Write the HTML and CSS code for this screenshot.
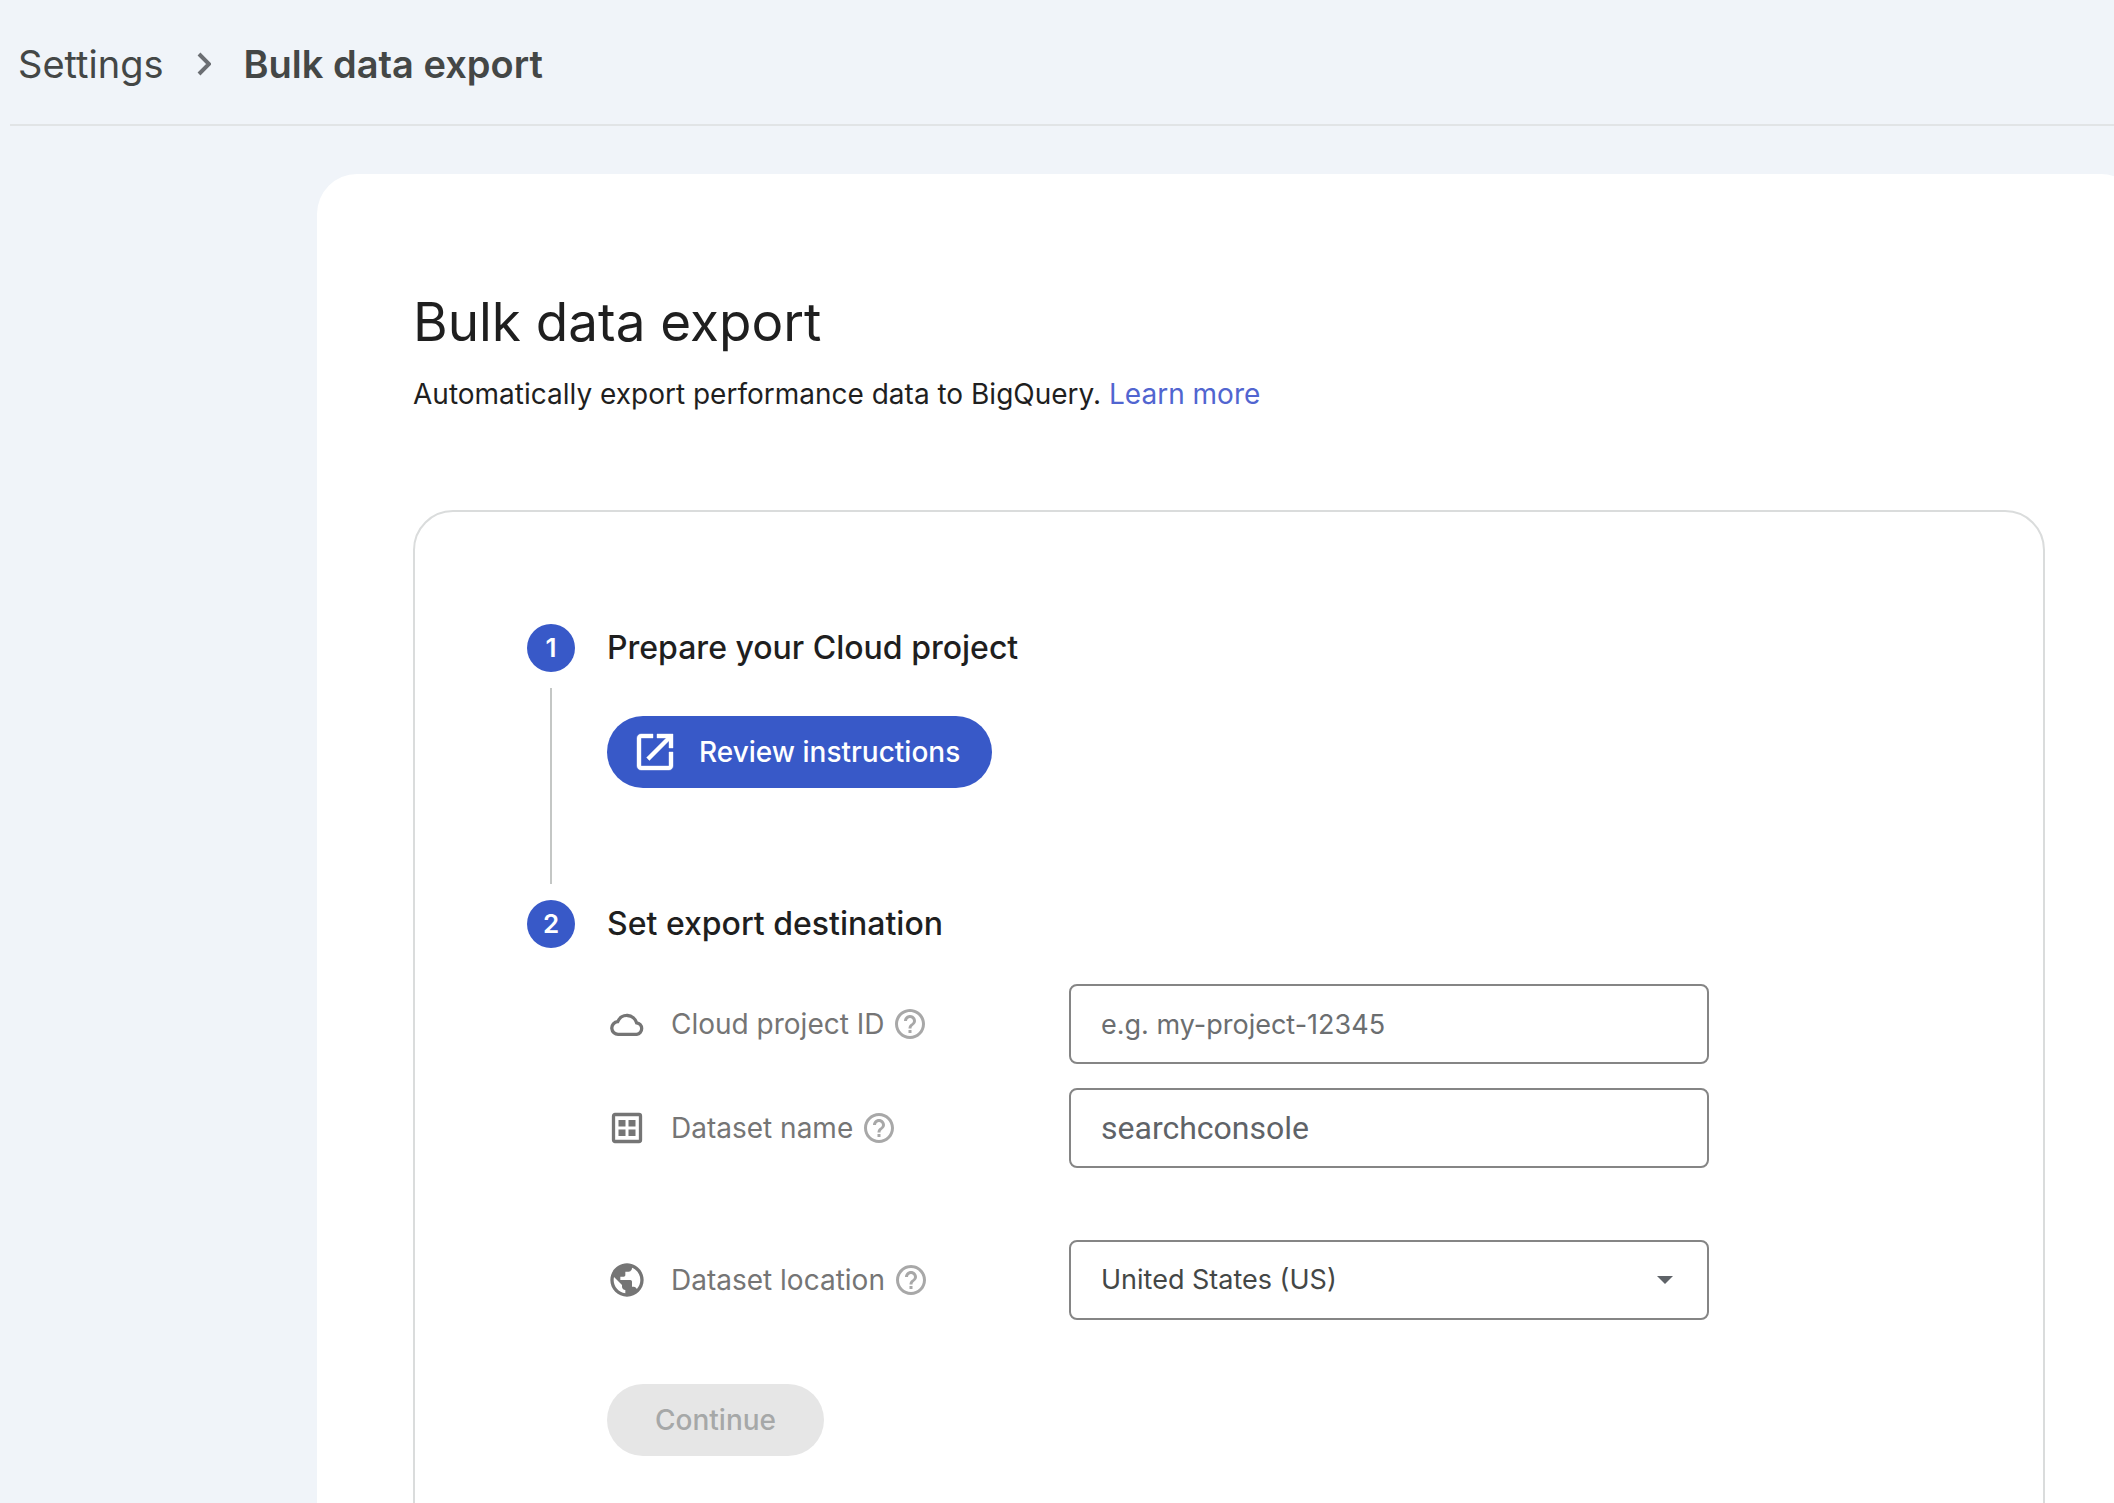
FILE: index.html
```
<!DOCTYPE html>
<html lang="en">
	<head>
		<meta charset="UTF-8">
		<meta name="viewport" content="width=device-width, initial-scale=1">
		<title>Bulk data export</title>
		<link rel="stylesheet" href="styles.css">
	</head>
	<body>
		<!-- shared icon for the three field labels -->
		<svg class="sprite" aria-hidden="true">
			<symbol id="help" viewBox="0 0 24 24">
				<path d="M11 18h2v-2h-2v2zm1-16C6.48 2 2 6.48 2 12s4.48 10 10 10 10-4.48 10-10S17.52 2 12 2zm0 18c-4.41 0-8-3.59-8-8s3.59-8 8-8 8 3.59 8 8-3.59 8-8 8zm0-14c-2.21 0-4 1.79-4 4h2c0-1.1.9-2 2-2s2 .9 2 2c0 2-3 1.75-3 5h2c0-2.25 3-2.5 3-5 0-2.21-1.79-4-4-4z"/>
			</symbol>
		</svg>

		<header class="topbar">
			<nav class="crumbs">
				<a href="#">Settings</a>
				<svg class="chevron" viewBox="0 0 14 24"><path d="M2 2l10 10L2 22"/></svg>
				<strong>Bulk data export</strong>
			</nav>
		</header>

		<main class="card">
			<h1>Bulk data export</h1>
			<p class="intro">Automatically export performance data to BigQuery. <a href="#">Learn more</a></p>

			<ol class="steps">
				<li class="step">
					<div class="marker">
						<span class="num">1</span>
						<i class="line"></i>
					</div>
					<div class="step-body">
						<h2>Prepare your Cloud project</h2>
						<button type="button" class="btn btn-primary">
							<svg viewBox="0 0 24 24"><path d="M19 19H5V5h6V3H5c-1.1 0-2 .9-2 2v14c0 1.1.9 2 2 2h14c1.1 0 2-.9 2-2v-7h-2v7zM13 3v2h4.6l-9.8 9.8 1.4 1.4L19 6.4V10h2V3z"/></svg>
							Review instructions
						</button>
					</div>
				</li>
				<li class="step">
					<div class="marker">
						<span class="num">2</span>
					</div>
					<form class="step-body">
						<h2>Set export destination</h2>
						<div class="fields">
							<div class="row">
								<svg class="icon" viewBox="0 0 40 40"><path class="stroke" d="M11.500 30.300a6.300 6.300 0 0 1-.8-12.600A10 10 0 0 1 29.600 18.800a5.800 5.800 0 0 1 .1 11.500z"/></svg>
								<label for="project">Cloud project ID</label>
								<svg class="help"><use href="#help"/></svg>
								<input id="project" class="box" type="text" placeholder="e.g. my-project-12345">
							</div>
							<div class="row row-dataset">
								<svg class="icon" viewBox="0 0 40 40"><rect class="stroke" x="6.500" y="6.500" width="27" height="27" rx="1.500"/><path d="M11.500 12h7v6.500h-7zM21.500 12h7v6.500h-7zM11.500 21.500h7V28h-7zM21.500 21.500h7V28h-7z"/></svg>
								<label for="dataset">Dataset name</label>
								<svg class="help"><use href="#help"/></svg>
								<input id="dataset" class="box box-value" type="text" value="searchconsole">
							</div>
							<div class="row">
								<svg class="icon" viewBox="0 0 24 24"><path d="M12 2C6.480 2 2 6.480 2 12s4.480 10 10 10 10-4.480 10-10S17.520 2 12 2zm-1 17.930c-3.950-.49-7-3.850-7-7.930 0-.62.080-1.210.21-1.790L9 15v1c0 1.100.9 2 2 2v1.930zm6.900-2.540c-.26-.81-1-1.390-1.900-1.390h-1v-3c0-.55-.45-1-1-1H8v-2h2c.55 0 1-.45 1-1V7h2c1.100 0 2-.9 2-2v-.41c2.930 1.190 5 4.060 5 7.410 0 2.080-.8 3.970-2.100 5.390z"/></svg>
								<label for="location">Dataset location</label>
								<svg class="help"><use href="#help"/></svg>
								<div class="select">
									<select id="location" class="box">
										<option>United States (US)</option>
									</select>
									<svg class="caret" viewBox="0 0 16 8"><path d="M0 0h16L8 8z"/></svg>
								</div>
							</div>
						</div>
						<button type="submit" class="btn btn-disabled" disabled>Continue</button>
					</form>
				</li>
			</ol>
		</main>
	</body>
</html>
```
FILE: styles.css
```
* {
	box-sizing: border-box;
}
body {
	height: 100vh;
	margin: 0;
	overflow: hidden;
	background: #f0f4f9;
	color: #1f1f1f;
	font: 28px/40px Inter, "Open Sans", sans-serif;
}
h1, h2, p, ol {
	margin: 0;
	padding: 0;
	font-weight: 400;
}
ol {
	list-style: none;
}
a {
	color: inherit;
	text-decoration: none;
}
svg {
	flex: none;
	fill: currentColor;
}
.sprite {
	display: none;
}

/* breadcrumb bar */
.topbar {
	margin-left: 10px;
	padding: 40px 8px 36px;
	border-bottom: 2px solid #e1e4e6;
}
.crumbs {
	display: flex;
	align-items: center;
	gap: 33px;
	color: #444746;
	font-size: 38px;
	line-height: 48px;
}
.crumbs strong {
	font-weight: 600;
}
.chevron {
	width: 14px;
	height: 24px;
	fill: none;
	stroke: #6b6e73;
	stroke-width: 4;
}

/* white page card, runs off the right and bottom of the window */
.card {
	min-height: 100vh;
	margin: 48px -27px 0 317px;
	padding: 112px 96px;
	border-radius: 40px;
	background: #fff;
}
h1 {
	font-size: 53px;
	line-height: 72px;
}
.intro {
	margin-top: 16px;
}
.intro a {
	color: #5165d0;
}
.steps {
	margin-top: 96px;
	padding: 112px;
	border: 2px solid #dadcdc;
	border-radius: 40px;
}
.step {
	display: flex;
	gap: 32px;
}
.marker {
	display: flex;
	flex-direction: column;
	align-items: center;
}
.num {
	width: 48px;
	height: 48px;
	border-radius: 50%;
	background: #3859c8;
	color: #fff;
	font-size: 26px;
	font-weight: 600;
	line-height: 48px;
	text-align: center;
}
.line {
	flex: 1;
	width: 2px;
	margin: 16px 0;
	background: #c4c7c5;
}
.step-body {
	flex: 1;
}
h2 {
	font-size: 32px;
	font-weight: 500;
	line-height: 48px;
}

/* buttons */
.btn {
	display: flex;
	align-items: center;
	height: 72px;
	border: 0;
	border-radius: 36px;
	font: 500 28px/40px Inter, "Open Sans", sans-serif;
}
.btn-primary {
	gap: 20px;
	margin: 44px 0 112px;
	padding: 0 32px 0 24px;
	background: #3859c8;
	color: #fff;
}
.btn-primary svg {
	width: 48px;
	height: 48px;
	stroke: currentColor;
	stroke-width: 0.2;
}
.btn-disabled {
	margin-top: 64px;
	padding: 0 48px;
	background: #e6e6e6;
	color: #a6a8a8;
}

/* export destination form */
.fields {
	display: flex;
	flex-direction: column;
	gap: 24px;
	margin-top: 36px;
}
.row {
	display: grid;
	grid-template-columns: 40px auto 1fr 640px;
	align-items: center;
	max-width: 1102px;
	color: #757575;
}
.row-dataset {
	margin-bottom: 48px;
}
.row label {
	margin-left: 24px;
}
.icon {
	width: 40px;
	height: 40px;
}
.stroke {
	fill: none;
	stroke: currentColor;
	stroke-width: 3.3;
}
.help {
	width: 36px;
	height: 36px;
	margin-left: 8px;
	color: #a8a8a8;
}
.box {
	width: 100%;
	height: 80px;
	padding: 0 30px;
	border: 2px solid #858585;
	border-radius: 8px;
	background: #fff;
	color: #444746;
	font: 27px/40px Inter, "Open Sans", sans-serif;
	appearance: none;
}
.box::placeholder {
	color: #6b6e70;
	opacity: 1;
}
.box-value {
	color: #5f6368;
	font-family: Roboto, sans-serif;
	font-size: 32px;
}
.select {
	display: grid;
	align-items: center;
}
.select > * {
	grid-area: 1 / 1;
}
.caret {
	justify-self: end;
	width: 16px;
	height: 8px;
	margin-right: 36px;
	color: #5f6368;
	pointer-events: none;
}
```
